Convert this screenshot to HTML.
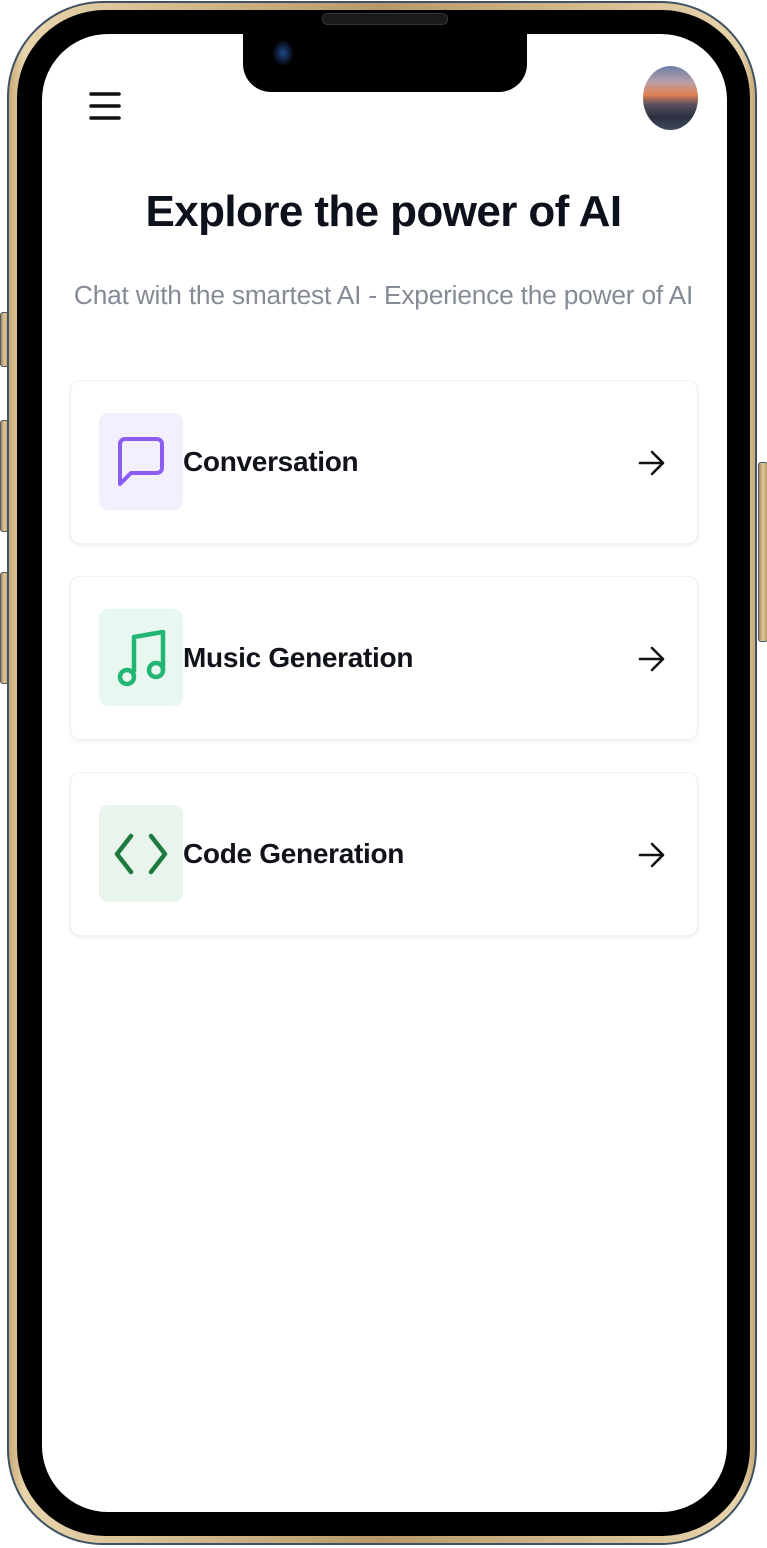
<!DOCTYPE html>
<html><head><style>
body{margin:0;width:767px;height:1548px;background:#fff;position:relative;overflow:hidden;font-family:"Liberation Sans",sans-serif}
.btn{position:absolute;background:linear-gradient(90deg,#a88a5c,#e0c89c,#b89a6a);border:1px solid #4a5a6a;border-radius:3px}
.outer{position:absolute;left:7px;top:1px;width:750px;height:1544px;border-radius:96px;background:#3f5263}
.gold{position:absolute;left:9px;top:3px;width:746px;height:1540px;border-radius:94px;background:linear-gradient(90deg,#c8aa78,#e8d4ac 2%,#b89868 50%,#e8d4ac 98%,#c8aa78)}
.black{position:absolute;left:17px;top:10px;width:733px;height:1526px;border-radius:88px;background:#000}
.screen{position:absolute;left:42px;top:34px;width:685px;height:1478px;border-radius:66px;background:#fff;overflow:hidden}
.notch{position:absolute;left:243px;top:30px;width:284px;height:62px;background:#000;border-radius:0 0 28px 28px}
.spk{position:absolute;left:322px;top:13px;width:124px;height:10px;border-radius:5px;background:#1a1a1a;border:1px solid #333}
.cam{position:absolute;left:273px;top:41px;width:20px;height:24px;border-radius:50%;background:radial-gradient(#1b4a8a,#0a1020 60%,#000)}
h1{position:absolute;left:0;width:767px;top:187px;margin:0;text-align:center;font-size:44px;font-weight:bold;color:#0d111c;letter-spacing:-.6px}
.sub{position:absolute;left:0;width:767px;top:280px;text-align:center;font-size:26.3px;color:#858b96;letter-spacing:-.2px}
.card{position:absolute;left:70px;width:626px;height:162px;border:1px solid #eef0f2;border-radius:10px;box-shadow:0 2px 4px rgba(0,0,0,.06);background:#fff}
.ic{position:absolute;left:28px;top:32px;width:84px;height:97px;border-radius:9px;display:flex;align-items:center;justify-content:center}
.lbl{position:absolute;left:112px;top:65px;font-size:28px;font-weight:bold;color:#10131a;letter-spacing:-.3px}
.arr{position:absolute;left:566px;top:67px}
</style></head><body>
<div class="btn" style="left:0;top:312px;width:7px;height:53px"></div>
<div class="btn" style="left:0;top:420px;width:7px;height:110px"></div>
<div class="btn" style="left:0;top:572px;width:7px;height:110px"></div>
<div class="btn" style="left:758px;top:462px;width:8px;height:178px"></div>
<div class="outer"></div><div class="gold"></div><div class="black"></div>
<div class="screen"></div>
<div class="notch"></div><div class="spk"></div><div class="cam"></div>
<svg style="position:absolute;left:88px;top:90px" width="34" height="32"><g stroke="#111" stroke-width="3.5" stroke-linecap="round"><line x1="3" y1="4" x2="31" y2="4"/><line x1="3" y1="16" x2="31" y2="16"/><line x1="3" y1="28" x2="31" y2="28"/></g></svg>
<div style="position:absolute;left:643px;top:66px;width:55px;height:64px;border-radius:50%;background:linear-gradient(180deg,#6a7fa8 0%,#b8a0a8 25%,#e08050 45%,#5a5060 60%,#2a3040 80%,#404a5a)"></div>
<h1>Explore the power of AI</h1>
<div class="sub">Chat with the smartest AI - Experience the power of AI</div>

<div class="card" style="top:380px">
<div class="ic" style="background:#f3effd"><svg width="50" height="54" viewBox="0 0 50 54"><path d="M4 49V9a5 5 0 0 1 5-5h32a5 5 0 0 1 5 5v24a5 5 0 0 1-5 5H15z" fill="none" stroke="#8b5cf6" stroke-width="4" stroke-linejoin="round"/></svg></div>
<div class="lbl">Conversation</div>
<svg class="arr" width="30" height="30"><path d="M3 15h23M15 4l11 11-11 11" fill="none" stroke="#111" stroke-width="2.6" stroke-linecap="round" stroke-linejoin="round"/></svg>
</div>

<div class="card" style="top:576px">
<div class="ic" style="background:#e8f8f1"><svg width="84" height="97" viewBox="0 0 84 97"><g fill="none" stroke="#22b573" stroke-width="4.5" stroke-linejoin="round" stroke-linecap="round"><path d="M35 62V28l29-5v38"/><circle cx="28" cy="68" r="7"/><circle cx="57" cy="61" r="7"/></g></svg></div>
<div class="lbl">Music Generation</div>
<svg class="arr" width="30" height="30"><path d="M3 15h23M15 4l11 11-11 11" fill="none" stroke="#111" stroke-width="2.6" stroke-linecap="round" stroke-linejoin="round"/></svg>
</div>

<div class="card" style="top:772px">
<div class="ic" style="background:#e8f4ec"><svg width="56" height="44" viewBox="0 0 56 44"><g fill="none" stroke="#1f7a3f" stroke-width="4.5" stroke-linecap="round" stroke-linejoin="round"><path d="M18 4L4 22l14 18"/><path d="M38 4l14 18-14 18"/></g></svg></div>
<div class="lbl">Code Generation</div>
<svg class="arr" width="30" height="30"><path d="M3 15h23M15 4l11 11-11 11" fill="none" stroke="#111" stroke-width="2.6" stroke-linecap="round" stroke-linejoin="round"/></svg>
</div>
</body></html>
